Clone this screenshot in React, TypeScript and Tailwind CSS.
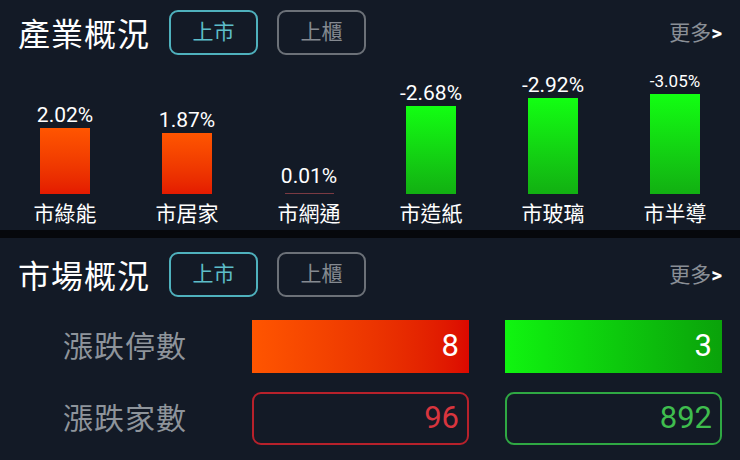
import React from 'react';

const FONT = "font-['Roboto','Noto_Sans_CJK_TC',sans-serif]";

interface Sector {
  name: string;
  pct: number;
  small?: boolean;
}

const sectors: Sector[] = [
  { name: '市綠能', pct: 2.02 },
  { name: '市居家', pct: 1.87 },
  { name: '市網通', pct: 0.01 },
  { name: '市造紙', pct: -2.68 },
  { name: '市玻璃', pct: -2.92 },
  { name: '市半導', pct: -3.05, small: true },
];

const maxPct = 3.05;
const maxBar = 100;

const Header: React.FC<{ title: string }> = ({ title }) => (
  <div className="flex items-center h-[45px] pl-[18px] pr-[18px]">
    <h2 className="text-[32px] leading-none text-white tracking-[1px] mt-[4px]">{title}</h2>
    <button className="ml-[19px] w-[89px] h-full rounded-[9px] border-2 border-[#4fb1bd] text-[#5dbdc9] text-[21px]">
      上市
    </button>
    <button className="ml-[19px] w-[89px] h-full rounded-[9px] border-2 border-[#6c7178] text-[#858a91] text-[21px]">
      上櫃
    </button>
    <div className="ml-auto flex items-center text-[21px] text-[#8a8f96] mt-[2px]">
      更多<span className="text-white font-bold text-[21px] leading-none">&gt;</span>
    </div>
  </div>
);

const App: React.FC = () => {
  return (
    <div className={`w-[740px] h-[460px] bg-[#06080c] flex flex-col ${FONT}`}>
      {/* Industry overview */}
      <section className="h-[230px] bg-[#131a26] pt-[10px]">
        <Header title="產業概況" />
        <div className="grid grid-cols-6 px-[4px]">
          {sectors.map((s) => {
            const h = Math.round((Math.abs(s.pct) / maxPct) * maxBar);
            const up = s.pct > 0;
            return (
              <div key={s.name} className="flex flex-col items-center">
                <div className="h-[139px] flex flex-col items-center justify-end">
                  <span className={`text-white leading-[24px] mb-[1px] ${s.small ? 'text-[17px]' : 'text-[21px]'}`}>
                    {s.pct.toFixed(2)}%
                  </span>
                  {h > 1 ? (
                    <div
                      className={`w-[50px] ${up ? 'bg-gradient-to-b from-[#ff5500] to-[#e41a00]' : 'bg-gradient-to-b from-[#12ff12] to-[#12b012]'}`}
                      style={{ height: h }}
                    />
                  ) : (
                    <div className="w-[49px] h-[1px] bg-[#7a3a42] mt-[4px]" />
                  )}
                </div>
                <span className="mt-[8px] text-[21px] leading-[24px] text-white">{s.name}</span>
              </div>
            );
          })}
        </div>
      </section>

      <div className="h-[8px]" />

      {/* Market overview */}
      <section className="flex-1 bg-[#131a26] pt-[14px]">
        <Header title="市場概況" />
        <div className="mt-[23px] flex flex-col gap-[19px]">
          <div className="flex items-center h-[53px]">
            <div className="w-[252px] pl-[63px] text-[30px] text-[#8e949b] tracking-[1px]">漲跌停數</div>
            <div className="w-[217px] h-full bg-gradient-to-r from-[#ff5500] to-[#dc0800] flex items-center justify-end pr-[10px] text-[31px] text-white">
              8
            </div>
            <div className="ml-[36px] w-[217px] h-full bg-gradient-to-r from-[#10f510] to-[#0aa20a] flex items-center justify-end pr-[10px] text-[31px] text-white">
              3
            </div>
          </div>
          <div className="flex items-center h-[53px]">
            <div className="w-[252px] pl-[63px] text-[30px] text-[#8e949b] tracking-[1px]">漲跌家數</div>
            <div className="w-[217px] h-full rounded-[9px] border-2 border-[#b7212b] flex items-center justify-end pr-[8px] text-[31px] text-[#d8353e]">
              96
            </div>
            <div className="ml-[36px] w-[217px] h-full rounded-[9px] border-2 border-[#2fa843] flex items-center justify-end pr-[8px] text-[31px] text-[#3fbd4e]">
              892
            </div>
          </div>
        </div>
      </section>
    </div>
  );
};

export default App;
